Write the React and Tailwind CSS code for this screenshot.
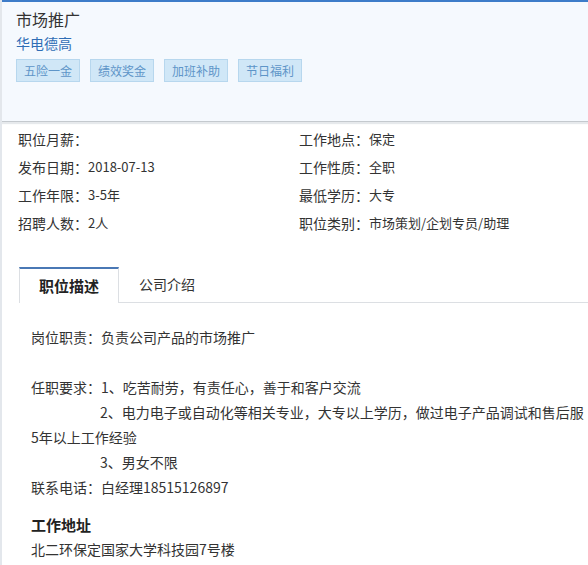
const cjk = { fontFamily: '"Noto Sans CJK SC", "Noto Sans", sans-serif' }

const tags = ["五险一金", "绩效奖金", "加班补助", "节日福利"]

const leftInfo = [
  ["职位月薪：", ""],
  ["发布日期：", "2018-07-13"],
  ["工作年限：", "3-5年"],
  ["招聘人数：", "2人"],
]

const rightInfo = [
  ["工作地点：", "保定"],
  ["工作性质：", "全职"],
  ["最低学历：", "大专"],
  ["职位类别：", "市场策划/企划专员/助理"],
]

function InfoRow({ label, value }) {
  return (
    <div className="flex h-[28px] items-center text-[14px] text-[#333]">
      <span>{label}</span>
      <span className="text-[13px]">{value}</span>
    </div>
  )
}

export default function App() {
  return (
    <div className="h-[565px] w-[588px] overflow-hidden border-l-2 border-[#e3e7ec] bg-white" style={cjk}>
      {/* Header */}
      <div className="h-[122px] w-[640px] border-t-2 border-b border-t-[#3d7cc9] border-b-[#c4c9ce] bg-[#f5f9fe] pl-[14px] pt-[7px] shadow-[0_2px_1px_#e6e9ec]">
        <div className="text-[16px] leading-5 text-[#333]">市场推广</div>
        <div className="mt-[4px] text-[14px] leading-5 text-[#2f6db5]">华电德高</div>
        <div className="mt-[6px] flex gap-[10px]">
          {tags.map((t) => (
            <span
              key={t}
              className="flex h-[23px] w-[64px] items-center justify-center border border-[#b7d7ee] bg-[#d0e7f7] text-[12px] text-[#5e95c8]"
            >
              {t}
            </span>
          ))}
        </div>
      </div>

      {/* Job info */}
      <div className="mt-[3px] grid grid-cols-[281px_1fr] pl-4">
        <div>
          {leftInfo.map(([l, v]) => (
            <InfoRow key={l} label={l} value={v} />
          ))}
        </div>
        <div>
          {rightInfo.map(([l, v]) => (
            <InfoRow key={l} label={l} value={v} />
          ))}
        </div>
      </div>

      {/* Tabs */}
      <div className="ml-[17px] mt-[30px] flex w-[640px]">
        <div className="flex h-[36px] w-[100px] items-center justify-center border-x border-t-2 border-x-[#dcdfe3] border-t-[#4a78b5] bg-white text-[15px] font-bold text-[#222]">
          职位描述
        </div>
        <div className="flex flex-1 items-center border-b border-[#dcdfe3] pl-[20px] text-[14px] text-[#333]">
          公司介绍
        </div>
      </div>

      {/* Description */}
      <div className="mt-[22px] whitespace-nowrap pl-[29px] text-[14px] leading-[25px] text-[#333]">
        <div>岗位职责：负责公司产品的市场推广</div>
        <div className="h-[25px]" />
        <div>任职要求：1、吃苦耐劳，有责任心，善于和客户交流</div>
        <div className="pl-[69px]">2、电力电子或自动化等相关专业，大专以上学历，做过电子产品调试和售后服</div>
        <div>5年以上工作经验</div>
        <div className="pl-[69px]">3、男女不限</div>
        <div>联系电话：白经理18515126897</div>
        <div className="mt-[12px] text-[15px] font-bold text-[#222]">工作地址</div>
        <div>北二环保定国家大学科技园7号楼</div>
      </div>
    </div>
  )
}
